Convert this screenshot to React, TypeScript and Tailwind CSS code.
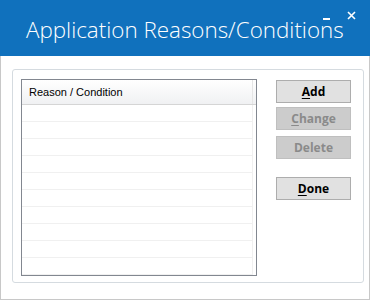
const rows = Array.from({ length: 10 });

const Btn = ({
  label,
  hot,
  disabled,
  className,
}: {
  label: string;
  hot?: string;
  disabled?: boolean;
  className?: string;
}) => {
  const rest = hot ? label.slice(1) : label;
  return (
    <div
      className={
        "flex h-[23px] w-[75px] items-center justify-center border text-[12px] font-bold " +
        (disabled
          ? "border-[#bfbfbf] bg-[#cccccc] text-[#8a8a8a] "
          : "border-[#adadad] bg-[#e1e1e1] text-black ") +
        (className ?? "")
      }
    >
      {hot && <span className="underline underline-offset-2">{hot}</span>}
      {rest}
    </div>
  );
};

export default function App() {
  return (
    <div className="flex h-[300px] w-[370px] flex-col bg-white font-['Open_Sans',sans-serif]">
      {/* title bar */}
      <div className="relative h-[56px] shrink-0 bg-[#1071bd]">
        <div className="pl-[26px] pt-[15px] text-[22.4px] font-light leading-[30px] text-white">
          Application Reasons/Conditions
        </div>
        <div className="absolute left-[323px] top-[18px] h-[2px] w-[7px] bg-white" />
        <svg
          className="absolute left-[347px] top-[11px]"
          width="9"
          height="9"
          viewBox="0 0 9 9"
        >
          <path d="M1 1L8 8M8 1L1 8" stroke="white" strokeWidth="1.6" />
        </svg>
      </div>

      {/* body */}
      <div className="flex-1 border-x border-b border-[#c8c8c8] pl-[11px] pt-[13px]">
        <div className="flex h-[214px] w-[352px] rounded-[3px] border border-[#d5dbe0] pl-[8px] pt-[9px]">
          <div className="flex h-[197px] w-[236px] flex-col overflow-hidden border border-[#828790]">
            <div className="flex h-[25px] shrink-0 items-center border-b border-[#d5d5d5] bg-gradient-to-b from-white to-[#f0f1f3] pl-[7px] font-['Liberation_Sans',sans-serif] text-[11px] text-black">
              <div className="w-[224px] border-r border-[#e5e5e5] leading-[24px]">Reason / Condition</div>
            </div>
            {rows.map((_, i) => (
              <div key={i} className="flex h-[17px] shrink-0">
                <div className="w-[231px] border-b border-r border-[#f0f0f0]" />
              </div>
            ))}
          </div>
          <div className="ml-[19px] flex flex-col pt-[1px]">
            <Btn label="Add" hot="A" />
            <Btn label="Change" hot="C" disabled className="mt-[4px]" />
            <Btn label="Delete" disabled className="mt-[6px]" />
            <Btn label="Done" hot="D" className="mt-[18px]" />
          </div>
        </div>
      </div>
    </div>
  );
}
